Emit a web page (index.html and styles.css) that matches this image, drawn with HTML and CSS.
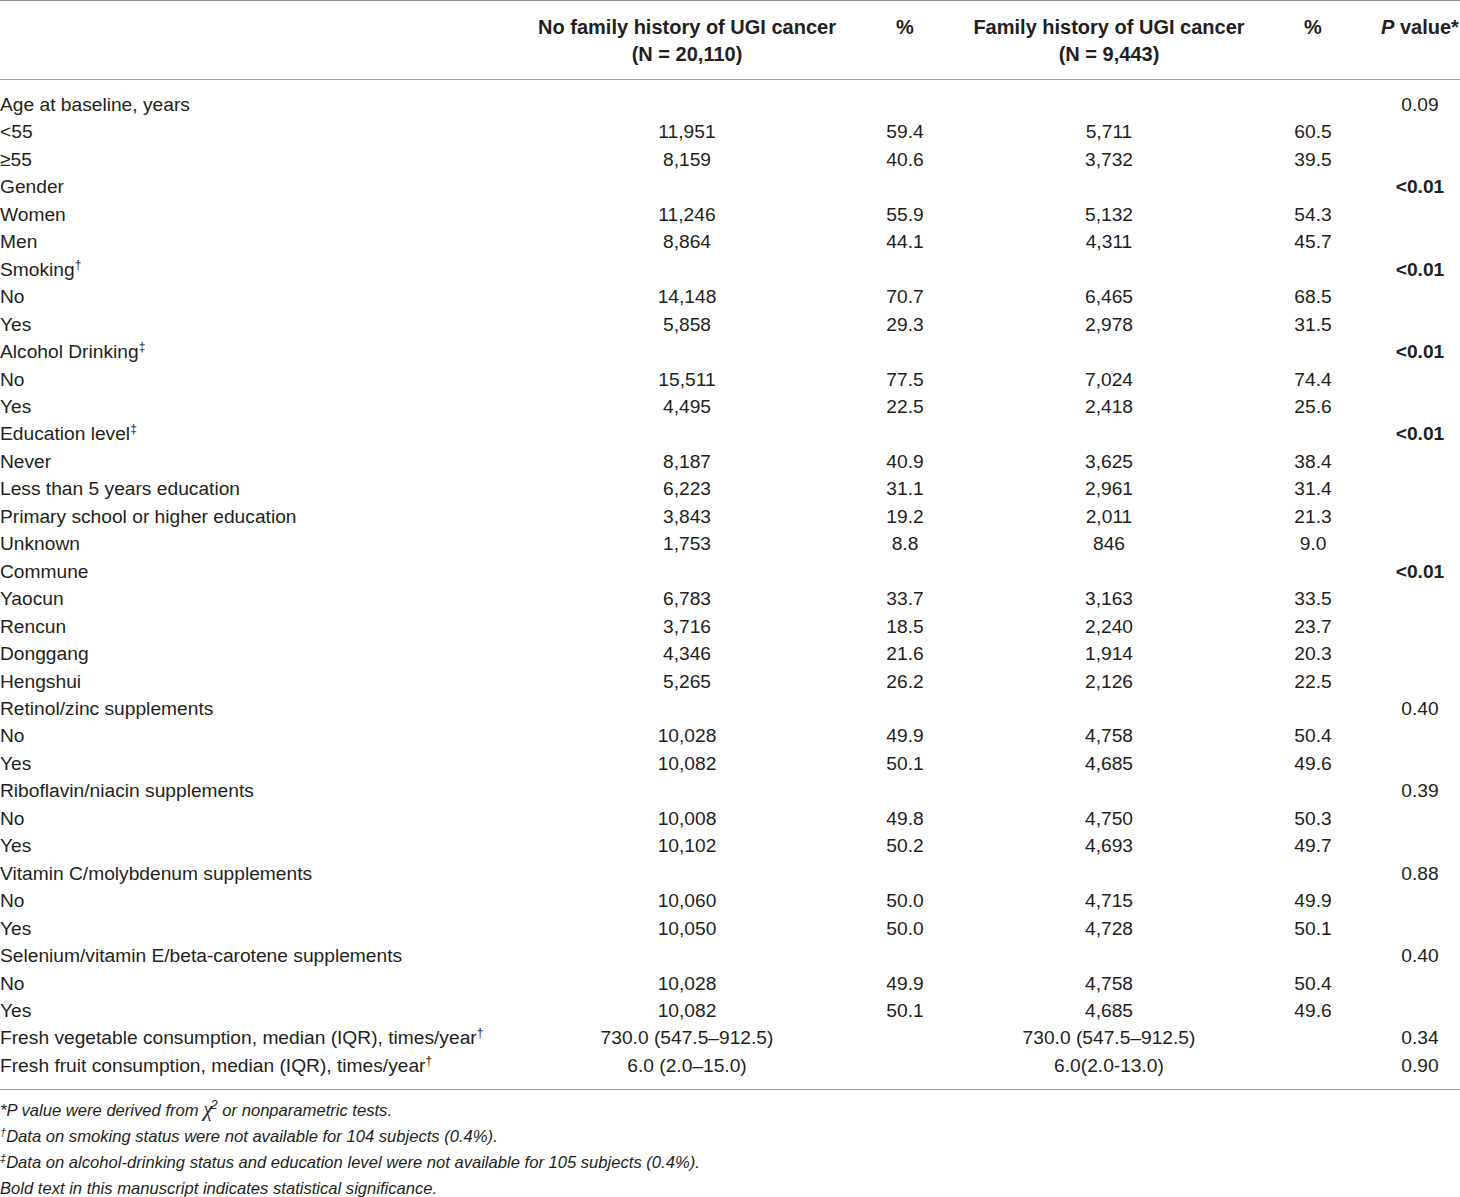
FILE: index.html
```html
<!DOCTYPE html>
<html lang="en">
<head>
  <meta charset="UTF-8">
  <title>Baseline characteristics by family history of UGI cancer</title>
  <link rel="stylesheet" href="styles.css">
</head>
<body>
  <!-- Baseline table -->
  <table class="stats">
    <colgroup>
      <col class="c-label">
      <col class="c-n1">
      <col class="c-p1">
      <col class="c-n2">
      <col class="c-p2">
      <col class="c-pv">
    </colgroup>
    <thead>
      <tr>
        <th></th>
        <th>No family history of UGI cancer<br>(N = 20,110)</th>
        <th>%</th>
        <th>Family history of UGI cancer<br>(N = 9,443)</th>
        <th>%</th>
        <th><em>P</em> value*</th>
      </tr>
    </thead>
    <tbody>
      <tr class="first"><td>Age at baseline, years</td><td></td><td></td><td></td><td></td><td>0.09</td></tr>
      <tr><td>&lt;55</td><td>11,951</td><td>59.4</td><td>5,711</td><td>60.5</td><td></td></tr>
      <tr><td>≥55</td><td>8,159</td><td>40.6</td><td>3,732</td><td>39.5</td><td></td></tr>
      <tr><td>Gender</td><td></td><td></td><td></td><td></td><td class="sig">&lt;0.01</td></tr>
      <tr><td>Women</td><td>11,246</td><td>55.9</td><td>5,132</td><td>54.3</td><td></td></tr>
      <tr><td>Men</td><td>8,864</td><td>44.1</td><td>4,311</td><td>45.7</td><td></td></tr>
      <tr><td>Smoking<sup>†</sup></td><td></td><td></td><td></td><td></td><td class="sig">&lt;0.01</td></tr>
      <tr><td>No</td><td>14,148</td><td>70.7</td><td>6,465</td><td>68.5</td><td></td></tr>
      <tr><td>Yes</td><td>5,858</td><td>29.3</td><td>2,978</td><td>31.5</td><td></td></tr>
      <tr><td>Alcohol Drinking<sup>‡</sup></td><td></td><td></td><td></td><td></td><td class="sig">&lt;0.01</td></tr>
      <tr><td>No</td><td>15,511</td><td>77.5</td><td>7,024</td><td>74.4</td><td></td></tr>
      <tr><td>Yes</td><td>4,495</td><td>22.5</td><td>2,418</td><td>25.6</td><td></td></tr>
      <tr><td>Education level<sup>‡</sup></td><td></td><td></td><td></td><td></td><td class="sig">&lt;0.01</td></tr>
      <tr><td>Never</td><td>8,187</td><td>40.9</td><td>3,625</td><td>38.4</td><td></td></tr>
      <tr><td>Less than 5 years education</td><td>6,223</td><td>31.1</td><td>2,961</td><td>31.4</td><td></td></tr>
      <tr><td>Primary school or higher education</td><td>3,843</td><td>19.2</td><td>2,011</td><td>21.3</td><td></td></tr>
      <tr><td>Unknown</td><td>1,753</td><td>8.8</td><td>846</td><td>9.0</td><td></td></tr>
      <tr><td>Commune</td><td></td><td></td><td></td><td></td><td class="sig">&lt;0.01</td></tr>
      <tr><td>Yaocun</td><td>6,783</td><td>33.7</td><td>3,163</td><td>33.5</td><td></td></tr>
      <tr><td>Rencun</td><td>3,716</td><td>18.5</td><td>2,240</td><td>23.7</td><td></td></tr>
      <tr><td>Donggang</td><td>4,346</td><td>21.6</td><td>1,914</td><td>20.3</td><td></td></tr>
      <tr><td>Hengshui</td><td>5,265</td><td>26.2</td><td>2,126</td><td>22.5</td><td></td></tr>
      <tr><td>Retinol/zinc supplements</td><td></td><td></td><td></td><td></td><td>0.40</td></tr>
      <tr><td>No</td><td>10,028</td><td>49.9</td><td>4,758</td><td>50.4</td><td></td></tr>
      <tr><td>Yes</td><td>10,082</td><td>50.1</td><td>4,685</td><td>49.6</td><td></td></tr>
      <tr><td>Riboflavin/niacin supplements</td><td></td><td></td><td></td><td></td><td>0.39</td></tr>
      <tr><td>No</td><td>10,008</td><td>49.8</td><td>4,750</td><td>50.3</td><td></td></tr>
      <tr><td>Yes</td><td>10,102</td><td>50.2</td><td>4,693</td><td>49.7</td><td></td></tr>
      <tr><td>Vitamin C/molybdenum supplements</td><td></td><td></td><td></td><td></td><td>0.88</td></tr>
      <tr><td>No</td><td>10,060</td><td>50.0</td><td>4,715</td><td>49.9</td><td></td></tr>
      <tr><td>Yes</td><td>10,050</td><td>50.0</td><td>4,728</td><td>50.1</td><td></td></tr>
      <tr><td>Selenium/vitamin E/beta-carotene supplements</td><td></td><td></td><td></td><td></td><td>0.40</td></tr>
      <tr><td>No</td><td>10,028</td><td>49.9</td><td>4,758</td><td>50.4</td><td></td></tr>
      <tr><td>Yes</td><td>10,082</td><td>50.1</td><td>4,685</td><td>49.6</td><td></td></tr>
      <tr><td>Fresh vegetable consumption, median (IQR), times/year<sup>†</sup></td><td>730.0 (547.5–912.5)</td><td></td><td>730.0 (547.5–912.5)</td><td></td><td>0.34</td></tr>
      <tr class="last"><td>Fresh fruit consumption, median (IQR), times/year<sup>†</sup></td><td>6.0 (2.0–15.0)</td><td></td><td>6.0(2.0-13.0)</td><td></td><td>0.90</td></tr>
    </tbody>
  </table>

  <!-- Footnotes -->
  <div class="notes">
    <p>*P value were derived from <span class="chi">χ<sup>2</sup></span> or nonparametric tests.</p>
    <p><sup>†</sup>Data on smoking status were not available for 104 subjects (0.4%).</p>
    <p><sup>‡</sup>Data on alcohol-drinking status and education level were not available for 105 subjects (0.4%).</p>
    <p>Bold text in this manuscript indicates statistical significance.</p>
  </div>
</body>
</html>
```

FILE: styles.css
```css
/* Basic styling */
body {
  margin: 0;
  background-color: #fff;
  color: #231f20;
  font-family: "Liberation Sans", Arial, sans-serif;
}

.stats {
  width: 1460px;
  border-collapse: collapse;
  table-layout: fixed;
  font-size: 19.2px;
  border-top: 1.5px solid #8c8c8c;
  border-bottom: 1.5px solid #9a9a9a;
}
.c-label { width: 536px; }
.c-n1 { width: 302px; }
.c-p1 { width: 134px; }
.c-n2 { width: 274px; }
.c-p2 { width: 134px; }
.c-pv { width: 80px; }

.stats th {
  font-size: 20px;
  font-weight: bold;
  text-align: center;
  vertical-align: top;
  line-height: 27px;
  padding: 13px 0 11px;
  border-bottom: 1.5px solid #a0a0a0;
}
.stats td {
  padding: 0;
  text-align: center;
  line-height: 27.46px;
  white-space: nowrap;
}
.stats td:first-child {
  text-align: left;
}
.stats tr.first td {
  padding-top: 11px;
}
.stats tr.last td {
  padding-bottom: 10px;
}
.stats sup {
  font-size: 12px;
  line-height: 0;
  vertical-align: 7px;
}
.sig {
  font-weight: bold;
}

.notes {
  padding-top: 6px;
  font-size: 16.6px;
  font-style: italic;
}
.notes p {
  margin: 0;
  line-height: 26px;
}
.notes sup {
  font-size: 11px;
  line-height: 0;
  vertical-align: 6px;
}
.chi {
  font-family: "Liberation Serif", serif;
  font-size: 21px;
}
.chi sup {
  font-family: "Liberation Sans", Arial, sans-serif;
  font-size: 13px;
  vertical-align: 7px;
  margin-left: -2px;
}
```
